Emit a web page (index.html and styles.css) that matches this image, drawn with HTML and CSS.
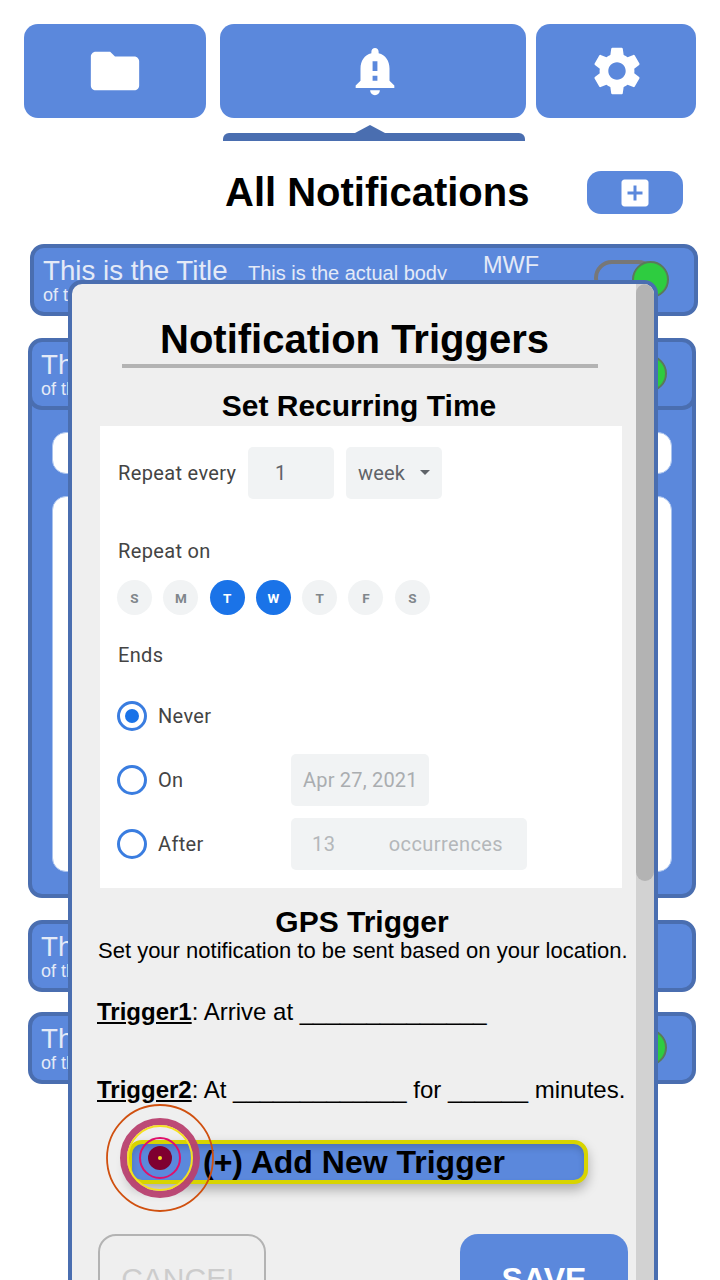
FILE: index.html
```html
<!DOCTYPE html>
<html lang="en">
<head>
<meta charset="utf-8">
<title>All Notifications</title>
<link rel="stylesheet" href="styles.css">
</head>
<body>
<div class="page">
  <nav class="tabs">
    <div class="tab tab-files">
      <svg class="tab-icon" viewBox="0 0 24 24"><path d="M10 4H4c-1.1 0-1.99.9-1.99 2L2 18c0 1.1.9 2 2 2h16c1.1 0 2-.9 2-2V8c0-1.1-.9-2-2-2h-8l-2-2z"/></svg>
    </div>
    <div class="tab tab-alerts">
      <svg class="tab-icon" viewBox="0 0 24 24"><path d="M18 16v-5c0-3.07-1.64-5.64-4.5-6.32V4c0-.83-.67-1.5-1.5-1.5s-1.5.67-1.5 1.5v.68C7.63 5.36 6 7.92 6 11v5l-2 2v1h16v-1l-2-2zm-5 0h-2v-2h2v2zm0-4h-2V8h2v4zm-1 10c1.1 0 2-.9 2-2h-4c0 1.1.9 2 2 2z"/></svg>
    </div>
    <div class="tab tab-settings">
      <svg class="tab-icon" viewBox="0 0 24 24"><path d="M19.14 12.94c.04-.3.06-.61.06-.94 0-.32-.02-.64-.07-.94l2.03-1.58c.18-.14.23-.41.12-.61l-1.92-3.32c-.12-.22-.37-.29-.59-.22l-2.39.96c-.5-.38-1.03-.7-1.62-.94l-.36-2.54c-.04-.24-.24-.41-.48-.41h-3.84c-.24 0-.43.17-.47.41l-.36 2.54c-.59.24-1.13.57-1.62.94l-2.39-.96c-.22-.08-.47 0-.59.22L2.74 8.87c-.12.21-.08.47.12.61l2.03 1.58c-.05.3-.09.63-.09.94s.02.64.07.94l-2.03 1.58c-.18.14-.23.41-.12.61l1.92 3.32c.12.22.37.29.59.22l2.39-.96c.5.38 1.03.7 1.62.94l.36 2.54c.05.24.24.41.48.41h3.84c.24 0 .44-.17.47-.41l.36-2.54c.59-.24 1.13-.56 1.62-.94l2.39.96c.22.08.47 0 .59-.22l1.92-3.32c.12-.22.07-.47-.12-.61l-2.01-1.58zM12 15.6c-1.98 0-3.6-1.62-3.6-3.6s1.62-3.6 3.6-3.6 3.6 1.62 3.6 3.6-1.62 3.6-3.6 3.6z"/></svg>
    </div>
  </nav>
  <div class="indicator"><span class="indicator-tip"></span></div>

  <header class="list-head">
    <h1 class="list-title">All Notifications</h1>
    <div class="add-btn">
      <svg class="add-icon" viewBox="0 0 24 24"><path d="M19 3H5c-1.11 0-2 .9-2 2v14c0 1.1.89 2 2 2h14c1.1 0 2-.9 2-2V5c0-1.1-.9-2-2-2zm-2 10h-4v4h-2v-4H7v-2h4V7h2v4h4v2z"/></svg>
    </div>
  </header>

  <section class="cards">
    <article class="card card-first">
      <div class="card-row">
        <div class="card-copy">
          <div class="card-line"><span class="card-title">This is the Title</span><span class="card-body">This is the actual body</span></div>
          <div class="card-more">of the notification</div>
        </div>
        <span class="card-days">MWF</span>
        <span class="toggle"><span class="knob"></span></span>
      </div>
    </article>

    <article class="card card-open">
      <div class="card-row card-row-open">
        <div class="card-copy">
          <div class="card-line"><span class="card-title">This is the Title</span></div>
          <div class="card-more">of the notification</div>
        </div>
        <span class="toggle"><span class="knob"></span></span>
      </div>
      <div class="field field-short"></div>
      <div class="field field-tall"></div>
    </article>

    <article class="card">
      <div class="card-row">
        <div class="card-copy">
          <div class="card-line"><span class="card-title">This is the Title</span></div>
          <div class="card-more">of the notification</div>
        </div>
      </div>
    </article>

    <article class="card">
      <div class="card-row">
        <div class="card-copy">
          <div class="card-line"><span class="card-title">This is the Title</span></div>
          <div class="card-more">of the notification</div>
        </div>
        <span class="toggle"><span class="knob"></span></span>
      </div>
    </article>
  </section>

  <div class="modal">
    <div class="scroll-track"><div class="scroll-thumb"></div></div>
    <div class="modal-content">
      <h2 class="modal-title">Notification Triggers</h2>
      <div class="modal-rule"></div>
      <h3 class="section-title recur-title">Set Recurring Time</h3>

      <div class="recur">
        <div class="recur-repeat">
          <span class="recur-label">Repeat every</span>
          <span class="box box-count">1</span>
          <span class="box box-unit">week<span class="caret"></span></span>
        </div>
        <div class="recur-label recur-on">Repeat on</div>
        <div class="days">
          <span class="day">S</span><span class="day">M</span><span class="day day-on">T</span><span class="day day-on">W</span><span class="day">T</span><span class="day">F</span><span class="day">S</span>
        </div>
        <div class="recur-label recur-ends">Ends</div>
        <div class="end-row end-never">
          <span class="radio radio-on"></span><span class="recur-label end-label">Never</span>
        </div>
        <div class="end-row end-on">
          <span class="radio"></span><span class="recur-label end-label">On</span>
          <span class="box box-date">Apr 27, 2021</span>
        </div>
        <div class="end-row end-after">
          <span class="radio"></span><span class="recur-label end-label">After</span>
          <span class="box box-occ"><span>13</span><span>occurrences</span></span>
        </div>
      </div>

      <h3 class="section-title gps-title">GPS Trigger</h3>
      <p class="gps-intro">Set your notification to be sent based on your location.</p>
      <p class="trigger trigger-one"><b>Trigger1</b>: Arrive at ______________</p>
      <p class="trigger trigger-two"><b>Trigger2</b>: At _____________ for ______ minutes.</p>

      <div class="add-trigger">
        <span class="add-trigger-text">(+) Add New Trigger</span>
        <svg class="target" viewBox="0 0 110 110">
          <circle class="ring ring-outer" cx="55" cy="55" r="53"/>
          <circle class="ring ring-wide" cx="55" cy="55" r="36.5"/>
          <circle class="ring ring-yellow" cx="55" cy="55" r="32"/>
          <circle class="ring ring-pink" cx="55" cy="55" r="20"/>
          <circle class="dot-dark" cx="55" cy="55" r="12"/>
          <circle class="dot-light" cx="55" cy="55" r="2"/>
        </svg>
      </div>

      <div class="actions">
        <div class="action action-cancel">CANCEL</div>
        <div class="action action-save">SAVE</div>
      </div>
    </div>
  </div>
</div>
</body>
</html>
```

FILE: styles.css
```css
* { box-sizing: border-box; }
html, body { margin: 0; padding: 0; height: 1280px; overflow: hidden; background: #fff; }
.page {
  position: relative;
  width: 720px;
  height: 1280px;
  overflow: hidden;
  padding-top: 24px;
  font-family: "Liberation Sans", Arial, sans-serif;
  color: #000;
}

/* Tabs */
.tabs { display: flex; height: 94px; margin-left: 24px; }
.tab {
  display: flex;
  align-items: center;
  justify-content: center;
  background: #5b88dc;
  border-radius: 14px;
}
.tab-files { width: 182px; margin-right: 14px; }
.tab-alerts { width: 306px; margin-right: 10px; }
.tab-settings { width: 160px; }
.tab-icon { width: 58px; height: 58px; fill: #fff; filter: blur(0.6px); }
.tab-alerts .tab-icon { margin-left: 3px; }
.tab-settings .tab-icon { margin-left: 1px; }

.indicator {
  position: relative;
  width: 302px;
  height: 8px;
  margin: 15px 0 0 223px;
  background: #4a6eb0;
  border-radius: 6px 6px 0 0;
}
.indicator-tip {
  position: absolute;
  left: 132px;
  top: -8px;
  border-left: 15px solid transparent;
  border-right: 15px solid transparent;
  border-bottom: 8px solid #4a6eb0;
}

/* List header */
.list-head {
  display: flex;
  align-items: center;
  height: 43px;
  margin-top: 30px;
  padding-left: 225px;
}
.list-title {
  width: 362px;
  margin: 0;
  font-size: 40px;
  line-height: 43px;
  font-weight: 700;
  white-space: nowrap;
}
.add-btn {
  display: flex;
  align-items: center;
  justify-content: center;
  width: 96px;
  height: 43px;
  background: #5b88dc;
  border-radius: 14px;
}
.add-icon { width: 36px; height: 36px; fill: #fff; }

/* Cards */
.cards { display: flex; flex-direction: column; margin: 30px 0 0 28px; width: 668px; }
.card {
  height: 72px;
  margin-bottom: 20px;
  background: #5b88dc;
  border: 4px solid #4a6eb0;
  border-radius: 14px;
  overflow: hidden;
}
.card-first { margin: 0 -2px 22px 2px; }
.card-open { height: 560px; margin-bottom: 22px; }
.card-row { position: relative; display: flex; height: 64px; padding: 6px 0 0 9px; }
.card-row-open {
  height: 68px;
  margin: 0 -4px;
  padding-left: 9px;
  border: 4px solid #4a6eb0;
  border-top: 0;
  border-radius: 0 0 14px 14px;
}
.card-copy { width: 440px; color: #e4eaf7; overflow: hidden; white-space: nowrap; }
.card-line { display: flex; align-items: baseline; height: 31px; }
.card-title { width: 205px; font-size: 27.7px; line-height: 33px; }
.card-body { font-size: 20px; line-height: 33px; }
.card-more { font-size: 18px; line-height: 20px; }
.card-days { margin-top: -2px; font-size: 23.5px; line-height: 26px; color: #e4eaf7; }
.toggle {
  position: absolute;
  left: 560px;
  top: 12px;
  width: 62px;
  height: 36px;
  border: 4px solid #777;
  border-radius: 18px;
}
.knob {
  position: absolute;
  right: -17px;
  top: -3px;
  width: 37px;
  height: 37px;
  background: #2ecc40;
  border: 2px solid #5a7a5a;
  border-radius: 50%;
}
.field { margin: 0 20px; background: #fff; border: 1px solid #a9c3ee; border-radius: 14px; }
.field-short { height: 42px; margin-top: 22px; }
.field-tall { height: 376px; margin-top: 22px; }

/* Modal */
.modal {
  position: absolute;
  left: 68px;
  top: 280px;
  width: 590px;
  height: 1060px;
  background: #efefef;
  border: 4px solid #4a6eb0;
  border-radius: 14px;
  overflow: hidden;
}
.scroll-track {
  position: absolute;
  right: 0;
  top: 0;
  bottom: 0;
  width: 18px;
  background: #d2d2d2;
}
.scroll-thumb { height: 597px; background: #b3b3b3; border-radius: 10px; }
.modal-content { width: 568px; }
.modal-title {
  margin: 0 0 0 -3px;
  padding-top: 33px;
  text-align: center;
  font-size: 40px;
  line-height: 44px;
  font-weight: 700;
  white-space: nowrap;
}
.modal-rule { width: 476px; height: 4px; margin: 3px 0 0 50px; background: #b3b3b3; }
.section-title { margin: 0; text-align: center; font-size: 30px; line-height: 34px; font-weight: 700; }
.recur-title { margin: 21px 0 0 6px; }

.recur {
  position: relative;
  width: 522px;
  height: 462px;
  margin: 3px 0 0 28px;
  padding: 21px 0 0 18px;
  background: #fff;
  font-family: Roboto, "Liberation Sans", sans-serif;
  color: #444;
}
.recur-label { font-size: 20px; line-height: 24px; letter-spacing: 0.35px; color: #444; }
.recur-repeat { display: flex; align-items: center; height: 52px; }
.recur-repeat .recur-label { width: 130px; }
.box {
  display: flex;
  align-items: center;
  height: 52px;
  background: #f1f3f4;
  border-radius: 5px;
  font-size: 20px;
  letter-spacing: 0.2px;
  color: #5f6368;
}
.box-count { width: 86px; margin-right: 12px; padding-left: 27px; }
.box-unit { position: relative; width: 96px; padding-left: 12px; }
.caret {
  position: absolute;
  right: 12px;
  top: 23px;
  border: 5px solid transparent;
  border-top-color: #5f6368;
  border-bottom: 0;
}
.recur-on { margin-top: 39px; padding-top: 1px; }
.days { display: flex; gap: 11.3px; margin-top: 17px; margin-left: -1px; }
.day {
  display: flex;
  align-items: center;
  justify-content: center;
  width: 35px;
  height: 35px;
  border-radius: 50%;
  background: #f1f3f4;
  font-size: 13.5px;
  font-weight: 700;
  color: #80868b;
}
.day-on { background: #1a73e8; color: #fff; }
.recur-ends { margin-top: 28px; }
.end-row { display: flex; align-items: center; height: 52px; }
.end-never { margin-top: 23px; height: 52px; }
.end-on, .end-after { margin-top: 12px; }
.radio {
  width: 30px;
  height: 30px;
  margin-left: -1px;
  border: 3px solid #3a7de0;
  border-radius: 50%;
  background: #fff;
}
.radio-on { padding: 5px; background: #1a73e8 content-box; }
.end-label { width: 133px; margin-left: 11px; font-size: 20px; }
.box-date { width: 138px; padding-left: 12px; color: #aaadb0; }
.box-occ {
  width: 236px;
  padding: 0 24px 0 21px;
  justify-content: space-between;
  color: #b4b7ba;
  letter-spacing: 0.4px;
}

.gps-title { margin: 17px 0 0 12px; line-height: 34px; }
.gps-intro {
  margin: 0 0 0 26px;
  width: 540px;
  font-size: 22px;
  line-height: 24px;
  white-space: nowrap;
}
.trigger { margin: 0 0 0 25px; font-size: 24px; line-height: 28px; white-space: nowrap; }
.trigger b { text-decoration: underline; }
.trigger-one { margin-top: 35px; }
.trigger-two { margin-top: 50px; }

.add-trigger {
  position: relative;
  display: flex;
  align-items: center;
  width: 460px;
  height: 44px;
  margin: 36px 0 0 56px;
  padding-left: 71px;
  background: #5b88dc;
  border: 4px solid #d8d400;
  border-radius: 14px;
  box-shadow: 0 6px 12px rgba(0, 0, 0, 0.28), inset 0 4px 6px rgba(0, 0, 0, 0.15);
}
.add-trigger-text { font-size: 32px; font-weight: 700; line-height: 34px; white-space: nowrap; }
.target { position: absolute; left: -27px; top: -41px; width: 110px; height: 110px; overflow: visible; }
.ring { fill: none; }
.ring-outer { stroke: #d0500f; stroke-width: 1.8; }
.ring-wide { stroke: #b8406f; stroke-width: 7; opacity: 0.95; }
.ring-yellow { stroke: #f5e020; stroke-width: 2; }
.ring-pink { stroke: #e0106a; stroke-width: 2; }
.dot-dark { fill: #7f0030; }
.dot-light { fill: #f5e020; }

.actions { display: flex; justify-content: space-between; width: 530px; margin: 50px 0 0 26px; }
.action {
  width: 168px;
  height: 90px;
  padding-top: 27px;
  border-radius: 18px;
  text-align: center;
  font-size: 32px;
  line-height: 36px;
}
.action-cancel { border: 2px solid #b3b3b3; color: #ccc; padding-top: 25px; font-size: 30px; }
.action-save { background: #5b88dc; color: #fff; font-weight: 700; }
```
